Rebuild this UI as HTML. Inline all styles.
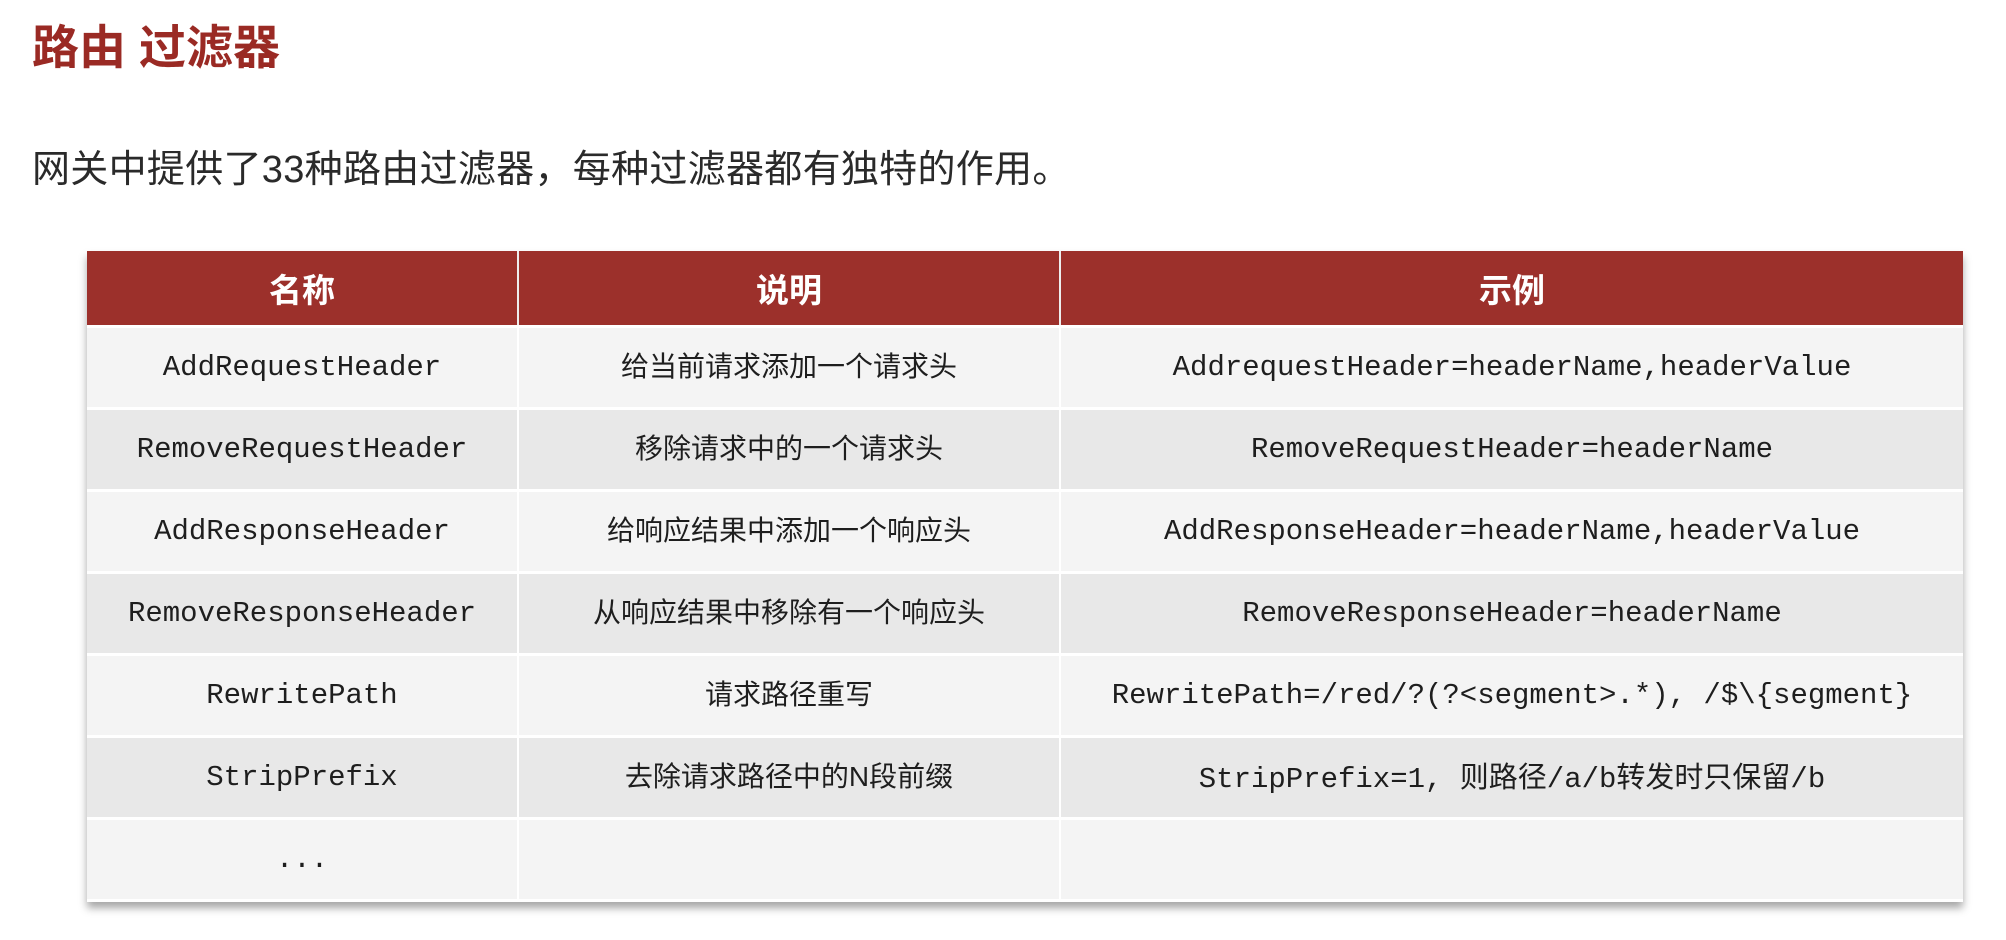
<!DOCTYPE html>
<html><head><meta charset="utf-8"><style>
body{margin:0;width:2006px;height:940px;background:#fff;overflow:hidden;position:relative;font-family:"Liberation Sans","Noto Sans CJK SC",sans-serif;}
.t{position:absolute;left:32px;top:20px;font-size:47px;font-weight:bold;color:#9a2a24;line-height:56px;}
.s{position:absolute;left:32px;top:146px;font-size:38px;color:#2a2a2a;line-height:48px;letter-spacing:0.3px}
table{position:absolute;left:87px;top:251px;width:1876px;border-collapse:collapse;box-shadow:0 6px 8px rgba(0,0,0,.35);}
td,th{text-align:center;padding:0;border:3px solid #fff;border-top:none;border-bottom:3px solid #fff;}
th{background:#9c302b;color:#fff;font-size:33px;height:74px;font-weight:bold;border-bottom:3px solid #fff;border-left:2px solid #eee;border-right:2px solid #eee}
td{font-family:"Liberation Mono","Noto Sans CJK SC",monospace;font-size:29px;color:#1e1e1e;height:79px;border-left:2px solid #fff;border-right:2px solid #fff}
td:nth-child(2){font-family:"Liberation Sans","Noto Sans CJK SC",sans-serif;font-size:28px}
td:nth-child(2) span,td.c span{position:relative;top:-3px}
tr:nth-child(odd) td{background:#f4f4f4}
tr:nth-child(even) td{background:#e8e8e8}
td:first-child,th:first-child{border-left:none}td:last-child,th:last-child{border-right:none}
</style></head><body>
<div class="t">路由 过滤器</div>
<div class="s">网关中提供了33种路由过滤器，每种过滤器都有独特的作用。</div>
<table>
<colgroup><col style="width:431px"><col style="width:542px"><col style="width:903px"></colgroup>
<thead><tr><th>名称</th><th>说明</th><th>示例</th></tr></thead>
<tbody>
<tr><td>AddRequestHeader</td><td><span>给当前请求添加一个请求头</span></td><td>AddrequestHeader=headerName,headerValue</td></tr>
<tr><td>RemoveRequestHeader</td><td><span>移除请求中的一个请求头</span></td><td>RemoveRequestHeader=headerName</td></tr>
<tr><td>AddResponseHeader</td><td><span>给响应结果中添加一个响应头</span></td><td>AddResponseHeader=headerName,headerValue</td></tr>
<tr><td>RemoveResponseHeader</td><td><span>从响应结果中移除有一个响应头</span></td><td>RemoveResponseHeader=headerName</td></tr>
<tr><td>RewritePath</td><td><span>请求路径重写</span></td><td>RewritePath=/red/?(?&lt;segment&gt;.*), /$\{segment}</td></tr>
<tr><td>StripPrefix</td><td><span>去除请求路径中的N段前缀</span></td><td class="c"><span>StripPrefix=1, 则路径/a/b转发时只保留/b</span></td></tr>
<tr><td>...</td><td></td><td></td></tr>
</tbody></table>
</body></html>
